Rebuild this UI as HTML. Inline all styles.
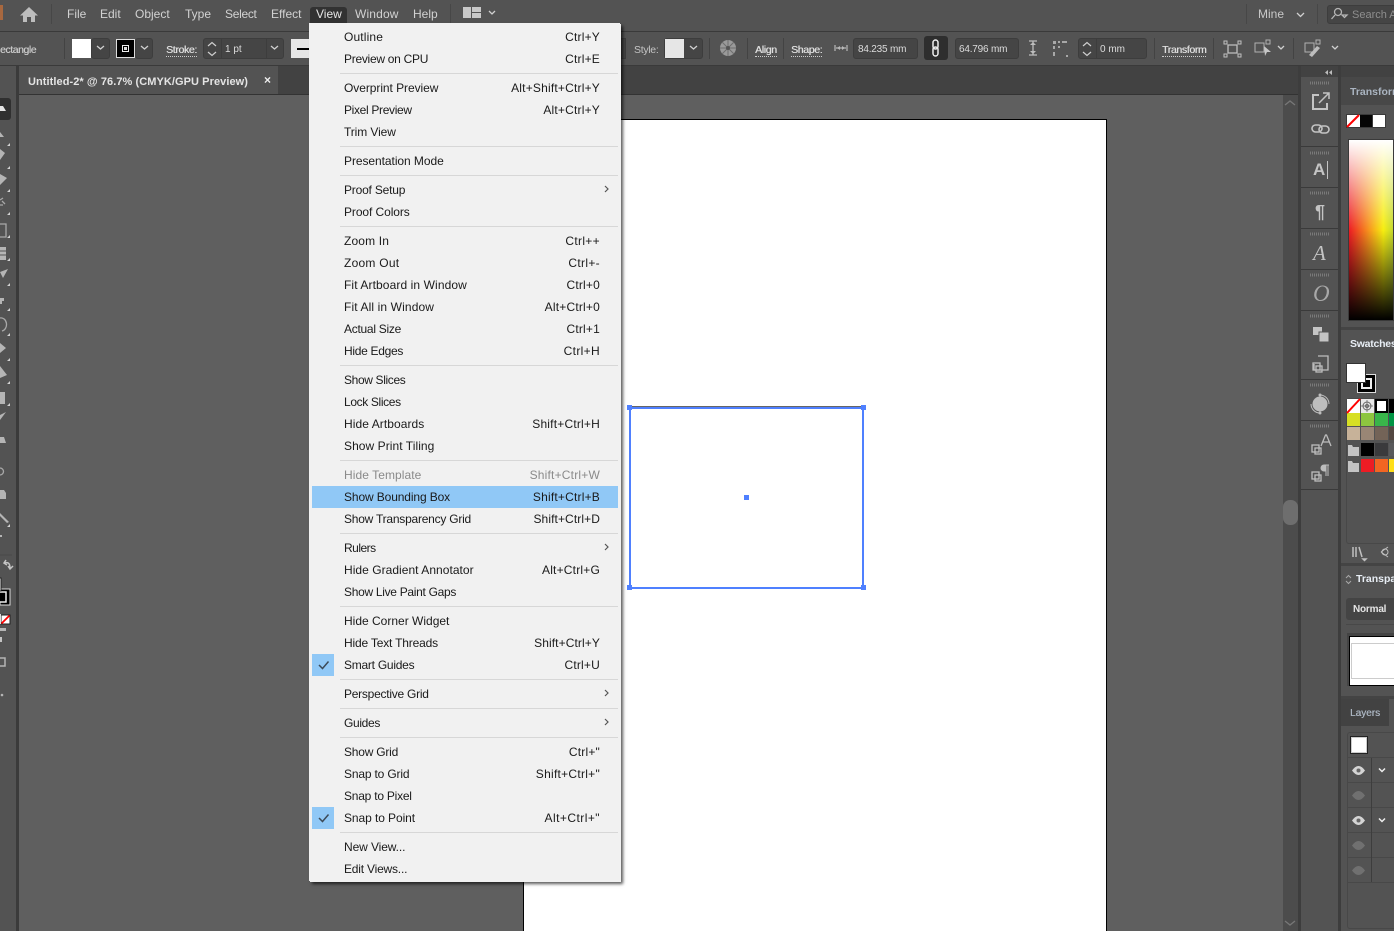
<!DOCTYPE html>
<html lang="en"><head><meta charset="utf-8"><title>Illustrator</title>
<style>
html,body{margin:0;padding:0;width:1394px;height:931px;overflow:hidden;background:#535353}
body{position:relative;font-family:"Liberation Sans",sans-serif;font-size:12px}
div,span{position:absolute;box-sizing:border-box;white-space:nowrap}
.r{background:#535353}
.m{color:#d2d2d2;top:6px;line-height:16px;font-size:12px}
.l{color:#dcdcdc;font-size:10.5px;line-height:14px;top:43px;letter-spacing:-.35px;text-shadow:.35px 0 #dcdcdc;border-bottom:1px dotted #ccc;height:14px}
.v{color:#dcdcdc;font-size:10px;line-height:14px;top:43px}
.b{background:#454545;border:1px solid #3d3d3d;border-radius:3px}
.s{width:1px;background:#434343;top:38px;height:21px}
#menu{left:310px;top:24px;width:311px;height:858px;background:#f1f1f1;box-shadow:-1px -1px 0 #f1f1f1,2px 2px 3px rgba(0,0,0,.65);border:1px solid #f1f1f1;color:#1a1a1a}
#menu i{position:absolute;left:29px;width:278px;height:1px;background:#d7d7d7;font-style:normal}
#menu b{position:absolute;font-weight:normal;left:33px;font-size:12px;line-height:22px;height:22px}
#menu u{position:absolute;text-decoration:none;right:20px;font-size:12px;line-height:22px;height:22px;letter-spacing:.2px}
#menu em{position:absolute;left:1px;width:306px;height:22px;background:#90c8f6}
.g{color:#8a8a8a!important}
</style></head><body>
<div class="r" style="left:0;top:0;width:1394px;height:32px"></div>
<div style="left:0;top:31px;width:1394px;height:1px;background:#3a3a3a"></div>
<div style="left:0;top:5px;width:3px;height:15px;background:#a8683f"></div>
<div style="left:51px;top:4px;width:1px;height:20px;background:#474747"></div>
<div style="left:310px;top:7px;width:37px;height:17px;background:#323232;border-radius:3px 3px 0 0"></div>
<span class="m" style="left:67px">File</span><span class="m" style="left:100px">Edit</span><span class="m" style="left:135px">Object</span><span class="m" style="left:185px">Type</span><span class="m" style="left:225px;letter-spacing:-.3px">Select</span><span class="m" style="left:271px">Effect</span><span class="m" style="left:316px;color:#e6e6e6">View</span><span class="m" style="left:355px;letter-spacing:.15px">Window</span><span class="m" style="left:413px">Help</span>
<div style="left:450px;top:4px;width:1px;height:20px;background:#474747"></div>
<div style="left:1246px;top:4px;width:1px;height:20px;background:#474747"></div>
<span class="m" style="left:1258px;color:#c8c8c8">Mine</span>
<div style="left:1317px;top:4px;width:1px;height:20px;background:#474747"></div>
<div style="left:1327px;top:5px;width:80px;height:19px;background:#454545;border:1px solid #3d3d3d;border-radius:3px"></div>
<span class="m" style="left:1352px;top:7px;color:#8e8e8e;font-size:11px">Search Adobe</span>

<!-- control bar -->
<div class="r" style="left:0;top:32px;width:1394px;height:33px"></div>
<div style="left:0;top:65px;width:1394px;height:1px;background:#3a3a3a"></div>
<span class="v" style="left:0;color:#c9c9c9;font-size:10.5px;letter-spacing:-.45px;text-shadow:.2px 0 #c9c9c9">ectangle</span>
<div style="left:64px;top:38px;width:1px;height:21px;background:#434343"></div>
<div class="b" style="left:91px;top:38px;width:19px;height:21px"></div>
<div style="left:72px;top:39px;width:19px;height:19px;background:#fff"></div>
<div class="b" style="left:135px;top:38px;width:18px;height:21px"></div>
<div style="left:116px;top:39px;width:19px;height:19px;background:#000;border:1px solid #ddd"></div>
<div style="left:122px;top:45px;width:7px;height:7px;border:1px solid #eee;box-shadow:inset 0 0 0 1px #000;background:#ddd"></div>
<span class="l" style="left:166px">Stroke:</span>
<div class="b" style="left:203px;top:38px;width:81px;height:21px"></div>
<div style="left:221px;top:39px;width:1px;height:19px;background:#3d3d3d"></div>
<div style="left:266px;top:39px;width:1px;height:19px;background:#3d3d3d"></div>
<span class="v" style="left:225px">1 pt</span>
<div style="left:291px;top:39px;width:19px;height:19px;background:#e6e6e6"></div>
<div style="left:297px;top:48px;width:13px;height:2px;background:#000"></div>
<div style="left:621px;top:38px;width:5px;height:21px;background:#454545;border:1px solid #3d3d3d;border-left:0"></div>
<span class="v" style="left:634px;color:#c4c4c4;font-size:10.5px;letter-spacing:-.3px">Style:</span>
<div class="b" style="left:664px;top:38px;width:39px;height:21px"></div>
<div style="left:665px;top:39px;width:19px;height:19px;background:#e6e6e6"></div>
<div class="s" style="left:709px"></div><div class="s" style="left:747px"></div><div class="s" style="left:783px"></div>
<span class="l" style="left:755px">Align</span><span class="l" style="left:791px">Shape:</span>
<div class="b" style="left:853px;top:38px;width:65px;height:21px"></div><span class="v" style="left:858px;letter-spacing:-.2px">84.235 mm</span>
<div style="left:924px;top:36px;width:24px;height:24px;background:#2e2e2e;border-radius:3px"></div>
<div class="b" style="left:955px;top:38px;width:64px;height:21px"></div><span class="v" style="left:959px;letter-spacing:-.2px">64.796 mm</span>
<div class="b" style="left:1078px;top:38px;width:69px;height:21px"></div>
<div style="left:1096px;top:39px;width:1px;height:19px;background:#3d3d3d"></div>
<span class="v" style="left:1100px">0 mm</span>
<div class="s" style="left:1154px"></div><div class="s" style="left:1213px"></div><div class="s" style="left:1293px"></div>
<span class="l" style="left:1162px">Transform</span>

<!-- tab row -->
<div style="left:0;top:66px;width:1394px;height:29px;background:#424242"></div>
<div style="left:19px;top:66px;width:259px;height:29px;background:#535353"></div>
<div style="left:0;top:94px;width:1340px;height:1px;background:#333"></div>
<span style="left:28px;top:75px;color:#e4e4e4;font-size:11px;font-weight:bold;line-height:14px;letter-spacing:.07px">Untitled-2* @ 76.7% (CMYK/GPU Preview)</span>
<span style="left:264px;top:73px;color:#eee;font-size:12px;font-weight:bold;line-height:14px">×</span>

<!-- canvas -->
<div style="left:19px;top:95px;width:1264px;height:836px;background:#5f5f5f"></div>
<div style="left:523px;top:119px;width:584px;height:812px;background:#fff;border:1px solid #000;border-bottom:0"></div>
<div style="left:629px;top:406px;width:235px;height:1px;background:#666"></div>
<div style="left:629px;top:407px;width:235px;height:182px;border:2px solid #4f80ff"></div>
<div style="left:627px;top:405px;width:5px;height:5px;background:#4f80ff"></div><div style="left:861px;top:405px;width:5px;height:5px;background:#4f80ff"></div><div style="left:627px;top:585px;width:5px;height:5px;background:#4f80ff"></div><div style="left:861px;top:585px;width:5px;height:5px;background:#4f80ff"></div><div style="left:744px;top:495px;width:5px;height:5px;background:#4f80ff"></div>

<!-- left toolbar -->
<div class="r" style="left:0;top:66px;width:16px;height:865px"></div>
<div style="left:16px;top:66px;width:3px;height:865px;background:#3b3b3b"></div>
<div style="left:0;top:98px;width:11px;height:22px;background:#303030;border-radius:0 3px 3px 0"></div>

<!-- right scrollbar + dock -->
<div style="left:1283px;top:95px;width:15px;height:836px;background:#4c4c4c"></div>
<div style="left:1283px;top:500px;width:15px;height:25px;background:#6e6e6e;border-radius:7px"></div>
<div style="left:1298px;top:66px;width:3px;height:865px;background:#3d3d3d"></div>
<div class="r" style="left:1301px;top:66px;width:37px;height:865px"></div>
<div style="left:1301px;top:66px;width:93px;height:11px;background:#424242"></div>
<div style="left:1338px;top:66px;width:3px;height:865px;background:#3d3d3d"></div>
<div style="left:1301px;top:146px;width:37px;height:1px;background:#3a3a3a"></div><div style="left:1301px;top:187px;width:37px;height:1px;background:#3a3a3a"></div><div style="left:1301px;top:228px;width:37px;height:1px;background:#3a3a3a"></div><div style="left:1301px;top:269px;width:37px;height:1px;background:#3a3a3a"></div><div style="left:1301px;top:310px;width:37px;height:1px;background:#3a3a3a"></div><div style="left:1301px;top:379px;width:37px;height:1px;background:#3a3a3a"></div><div style="left:1301px;top:420px;width:37px;height:1px;background:#3a3a3a"></div><div style="left:1301px;top:489px;width:37px;height:1px;background:#3a3a3a"></div>
<span style="left:1313px;top:156px;color:#c4c4c4;font-size:17px;font-weight:bold;line-height:28px">A</span>
<div style="left:1327px;top:161px;width:1px;height:18px;background:#c4c4c4"></div>
<span style="left:1315px;top:200px;color:#c4c4c4;font-size:18px;font-weight:bold;line-height:24px">¶</span>
<span style="left:1313px;top:241px;color:#c4c4c4;font-family:'Liberation Serif',serif;font-style:italic;font-size:21px;line-height:24px">A</span>
<span style="left:1313px;top:281px;color:#a8a8a8;font-family:'Liberation Serif',serif;font-style:italic;font-size:23px;line-height:26px">O</span>

<!-- right panels -->
<div class="r" style="left:1341px;top:77px;width:53px;height:854px"></div>
<div style="left:1341px;top:77px;width:53px;height:28px;background:#484848"></div>
<span style="left:1350px;top:85px;color:#aab4c0;font-size:10.5px;font-weight:bold;line-height:14px">Transform</span>
<div style="left:1346px;top:114px;width:40px;height:14px;background:#3a3a3a"></div>
<div style="left:1347px;top:115px;width:13px;height:12px;background:#fff"></div>
<div style="left:1360px;top:115px;width:12px;height:12px;background:#050505"></div>
<div style="left:1373px;top:115px;width:12px;height:12px;background:#fff"></div>
<div style="left:1348px;top:139px;width:46px;height:182px;background:linear-gradient(to bottom,#fff 0,rgba(255,255,255,0) 50%,rgba(0,0,0,0) 50%,#000 100%),linear-gradient(to right,#ed1c24 0,#f7941d 45%,#f7ee10 78%,#c4d82e 100%);border:1px solid #3a3a3a"></div>
<div style="left:1341px;top:327px;width:53px;height:3px;background:#444"></div>
<span style="left:1350px;top:337px;color:#e8eef5;font-size:10.5px;font-weight:bold;line-height:14px;letter-spacing:-.25px">Swatches</span>
<div style="left:1346px;top:398px;width:48px;height:146px;border:1px solid #484848;border-right:0;border-radius:3px 0 0 3px"></div>
<div style="left:1357px;top:374px;width:19px;height:19px;background:#000;border:1px solid #ddd"></div>
<div style="left:1361px;top:378px;width:11px;height:11px;border:2px solid #eee"></div>
<div style="left:1346px;top:363px;width:20px;height:20px;background:#fff;border:1px solid #333"></div>
<div style="left:1347px;top:399px;width:13px;height:14px;background:#fff"></div>
<div style="left:1361px;top:399px;width:13px;height:14px;background:#e8e8e8"></div>
<div style="left:1375px;top:399px;width:13px;height:14px;background:#fff;border:2px solid #000"></div>
<div style="left:1389px;top:399px;width:5px;height:14px;background:#000"></div>
<div style="left:1347px;top:413px;width:13px;height:13px;background:#d7df23"></div><div style="left:1361px;top:413px;width:13px;height:13px;background:#8dc63f"></div><div style="left:1375px;top:413px;width:13px;height:13px;background:#39b54a"></div><div style="left:1389px;top:413px;width:5px;height:13px;background:#009444"></div>
<div style="left:1347px;top:427px;width:13px;height:13px;background:#c7b299"></div><div style="left:1361px;top:427px;width:13px;height:13px;background:#998675"></div><div style="left:1375px;top:427px;width:13px;height:13px;background:#736357"></div><div style="left:1389px;top:427px;width:5px;height:13px;background:#534741"></div>
<div style="left:1361px;top:443px;width:13px;height:13px;background:#000"></div><div style="left:1375px;top:443px;width:13px;height:13px;background:#3a3a3c"></div><div style="left:1389px;top:443px;width:5px;height:13px;background:#58595b"></div>
<div style="left:1361px;top:459px;width:13px;height:13px;background:#ed1c24"></div><div style="left:1375px;top:459px;width:13px;height:13px;background:#f26522"></div><div style="left:1389px;top:459px;width:5px;height:13px;background:#ffde17"></div>
<div style="left:1341px;top:563px;width:53px;height:3px;background:#444"></div>
<span style="left:1356px;top:572px;color:#e8eef5;font-size:10.5px;font-weight:bold;line-height:14px">Transparency</span>
<div style="left:1346px;top:598px;width:48px;height:22px;background:#444;border-radius:3px 0 0 3px"></div>
<span style="left:1353px;top:603px;color:#e4e4e4;font-size:10px;font-weight:bold;line-height:14px;letter-spacing:-.2px">Normal</span>
<div style="left:1346px;top:624px;width:48px;height:1px;background:#484848"></div>
<div style="left:1347px;top:633px;width:47px;height:53px;background:#444"></div>
<div style="left:1349px;top:636px;width:45px;height:50px;background:#fff;border:1px solid #000;border-right:0"></div>
<div style="left:1351px;top:643px;width:43px;height:36px;border:1px solid #ccc;border-right:0"></div>
<div style="left:1341px;top:696px;width:53px;height:3px;background:#444"></div>
<div style="left:1341px;top:699px;width:48px;height:27px;background:#424242"></div>
<span style="left:1350px;top:707px;color:#aab4c0;font-size:10px;line-height:14px;text-shadow:.3px 0 #aab4c0">Layers</span>
<div style="left:1347px;top:732px;width:47px;height:197px;border:1px solid #484848;border-right:0;border-radius:3px 0 0 3px"></div>
<div style="left:1350px;top:736px;width:18px;height:18px;background:#fff;border:1px solid #222;box-shadow:inset 0 0 0 1px #ccc"></div>
<div style="left:1347px;top:757px;width:47px;height:1px;background:#484848"></div><div style="left:1347px;top:782px;width:47px;height:1px;background:#484848"></div><div style="left:1347px;top:807px;width:47px;height:1px;background:#484848"></div><div style="left:1347px;top:832px;width:47px;height:1px;background:#484848"></div><div style="left:1347px;top:857px;width:47px;height:1px;background:#484848"></div><div style="left:1347px;top:882px;width:47px;height:1px;background:#484848"></div>
<div style="left:1371px;top:758px;width:1px;height:124px;background:#3d3d3d"></div>

<!-- icons -->
<svg style="position:absolute;left:0;top:0" width="1394" height="931" viewBox="0 0 1394 931" fill="none">
<path d="M29 7 20 15.500h3V22h4v-5h4v5h4v-6.500h3z" fill="#bdbdbd"/>
<rect x="463" y="7" width="8" height="11" fill="#c8c8c8"/><rect x="472" y="7" width="9" height="5" fill="#c8c8c8"/><rect x="472" y="13" width="9" height="5" fill="#c8c8c8"/>
<g stroke="#d0d0d0" stroke-width="1.300"><path d="M489 11l3 3 3-3M1297 13l3.500 3.500 3.500-3.500M97 46l3.500 3 3.500-3M141 46l3.500 3 3.500-3M271 46l3.500 3 3.500-3M690 46l3.500 3 3.500-3M1278 46l3 3 3-3M1332 46l3 3 3-3"/></g>
<g stroke="#cfcfcf" stroke-width="1.200"><path d="M208 46l4-3.500 4 3.500M208 52l4 3.500 4-3.500M1083 46l4-3.500 4 3.500M1083 52l4 3.500 4-3.500"/></g>
<circle cx="1338" cy="12" r="3.500" stroke="#b5b5b5" stroke-width="1.300"/><path d="M1335 15l-3.500 4M1342 15h5l-2.500 2.500z" stroke="#b5b5b5" stroke-width="1.300"/>
<circle cx="728" cy="48" r="8" fill="#9a9a9a"/><path d="M728 40v16M720 48h16M722 42l12 12M734 42l-12 12" stroke="#6e6e6e"/><circle cx="728" cy="48" r="2" fill="#535353"/>
<path d="M835 45v6M847 45v6M836 48h10" stroke="#b8b8b8" stroke-width="1.200"/><path d="M837 48l3-2v4zM845 48l-3-2v4z" fill="#b8b8b8"/>
<rect x="933" y="40" width="5" height="9" rx="2.500" stroke="#eee" stroke-width="1.500"/><rect x="933" y="47" width="5" height="9" rx="2.500" stroke="#eee" stroke-width="1.500"/>
<path d="M1029 41h8M1029 55h8M1033 41v14" stroke="#bdbdbd" stroke-width="1.300"/><path d="M1030 45h6l-3-3zM1030 51h6l-3 3z" fill="#bdbdbd"/>
<path d="M1053 41h3v3h-3zM1058 41h2v2h-2zM1062 41h5v2h-5zM1053 46h2v3h-2zM1058 46h2v2h-2zM1053 52h2v4h-2zM1066 55h2v2h-2z" fill="#a8a8a8"/>
<path d="M1228 45h9v8h-9z" stroke="#c0c0c0" stroke-width="1.300"/><path d="M1224 41h3v3h-3zM1238 41h3v3h-3zM1224 54h3v3h-3zM1238 54h3v3h-3z" stroke="#c0c0c0"/>
<path d="M1255 43h9v9h-9z" stroke="#b0b0b0"/><path d="M1264 46l7 6h-4l-2 4z" fill="#c6c6c6"/><path d="M1266 40h4v4h-4z" stroke="#b0b0b0"/>
<path d="M1305 43h9v9h-9z" stroke="#b0b0b0"/><path d="M1309 55l8-9 3 2-8 9z" fill="#bdbdbd"/><path d="M1316 40h4v4h-4z" stroke="#b0b0b0"/>
<path d="M1285 105l5-4 5 4M1285 921l5 4 5-4" stroke="#777" stroke-width="1.300"/>
<path d="M1332 70l-3 2.500 3 2.500zM1328 70l-3 2.500 3 2.500z" fill="#bdbdbd"/>
<!-- dock grips -->
<path d="M1310 83h19M1310 153h19M1310 193h19M1310 234h19M1310 275h19M1310 316h19M1310 385h19M1310 426h19" stroke="#7a7a7a" stroke-width="3" stroke-dasharray="1 1"/>
<path d="M1319 95h-6v14h14v-6" stroke="#c4c4c4" stroke-width="2"/><path d="M1319 103l10-10M1323 93h6v6" stroke="#c4c4c4" stroke-width="1.500"/>
<rect x="1312" y="125" width="10" height="7" rx="3.500" stroke="#c4c4c4" stroke-width="1.600"/><rect x="1319" y="126" width="10" height="7" rx="3.500" stroke="#c4c4c4" stroke-width="1.600"/>
<rect x="1313" y="327" width="9" height="8" fill="#c4c4c4"/><rect x="1319" y="332" width="10" height="10" fill="#c4c4c4" stroke="#535353"/>
<path d="M1318 356h10v14h-14v-6" stroke="#bdbdbd" stroke-width="1.300"/><rect x="1313" y="363" width="7" height="7" stroke="#bdbdbd" stroke-width="1.300"/><rect x="1316" y="366" width="6" height="6" stroke="#bdbdbd" stroke-width="1.300"/>
<circle cx="1320" cy="404" r="7.500" fill="#bdbdbd"/><path d="M1320 395a9 9 0 0 1 9 9M1320 413a9 9 0 0 1-9-9" stroke="#bdbdbd"/><circle cx="1320" cy="395" r="1.500" fill="#bdbdbd"/><circle cx="1320" cy="413" r="1.500" fill="#bdbdbd"/>
<rect x="1312" y="445" width="7" height="7" stroke="#bdbdbd" stroke-width="1.300"/><rect x="1315" y="448" width="6" height="6" stroke="#bdbdbd" stroke-width="1.300"/><path d="M1321 446l4.500-11h1l4.500 11M1323 442h6" stroke="#bdbdbd" stroke-width="1.300"/>
<rect x="1312" y="472" width="7" height="7" stroke="#bdbdbd" stroke-width="1.300"/><rect x="1315" y="475" width="6" height="6" stroke="#bdbdbd" stroke-width="1.300"/><path d="M1326 465h-2a3 3 0 0 0 0 6h2zM1326 465v11M1328 465v11M1326 465h3" fill="#bdbdbd" stroke="#bdbdbd"/>
<!-- swatch details -->
<path d="M1347 127l12-12" stroke="#f00" stroke-width="2"/>
<path d="M1347 413l13-14" stroke="#f00" stroke-width="2"/>
<circle cx="1367" cy="406" r="4" stroke="#666"/><circle cx="1367" cy="406" r="1.500" stroke="#666"/><path d="M1361 406h12M1367 400v12" stroke="#666" stroke-width=".8"/>
<path d="M1348 445h4l1 2h6v9h-11zM1348 461h4l1 2h6v9h-11z" fill="#c4c4c4"/>
<path d="M1353 547v10M1356 547v10M1359 547l3 10M1363 559h3l-1.500 1.500z" stroke="#c0c0c0" stroke-width="1.500"/>
<circle cx="1385" cy="552" r="3" stroke="#c0c0c0"/><path d="M1381 552l7-5M1381 552l7 5" stroke="#c0c0c0"/>
<path d="M1346 578l2.500-2.500 2.500 2.500M1346 581l2.500 2.500 2.500-2.500" stroke="#a8a8a8"/>
<!-- eyes -->
<g><path d="M1352 770.500q6.500-9 13 0q-6.500 9-13 0z" fill="#d4d4d4"/><circle cx="1358.500" cy="770.500" r="2" fill="#666"/><path d="M1352 820.500q6.500-9 13 0q-6.500 9-13 0z" fill="#d4d4d4"/><circle cx="1358.500" cy="820.500" r="2" fill="#666"/></g>
<g fill="#707070"><path d="M1352 795.500q6.500-9 13 0q-6.500 9-13 0zM1352 845.500q6.500-9 13 0q-6.500 9-13 0zM1352 870.500q6.500-9 13 0q-6.500 9-13 0z"/></g>
<path d="M1379 768.500l3 3 3-3M1379 818.500l3 3 3-3" stroke="#eee" stroke-width="1.500"/>
<!-- left tools -->
<path d="M0 106h3l3 5h-6z" fill="#e4e4e4"/>
<g fill="#b5b5b5">
<path d="M0 132l4 5h-4zM0 149l5 4-5 7zM0 174l7 4-7 7zM0 247h6v13h-6zM0 272l8-3-5 9zM0 298h4v3h-2v3h-2zM0 343l6 5-6 5zM0 366l7 9-7 3zM0 392h5v12h-5zM0 415l6-3-6 8zM0 437h4l2 6h-6zM0 490h4l2 3v6h-6zM0 513l5 5 4 4-2 1-7-7zM0 535h2v2h-2zM0 628h6v3h-6z"/>
</g>
<path d="M0 224h6v13h-6" stroke="#a8a8a8" stroke-width="1.300"/>
<path d="M0 200l3-2M0 205h3M2 201l3 3M0 318a5 6 0 0 1 2 13M0 468a3.500 3.500 0 1 1 0 7" stroke="#a8a8a8" stroke-width="1.300"/>
<path d="M0 251h6M0 255h6" stroke="#535353"/>
<g fill="#d2d2d2"><path d="M10 143l-3 3h3zM10 166l-3 3h3zM10 189l-3 3h3zM10 212l-3 3h3zM10 235l-3 3h3zM10 258l-3 3h3zM10 283l-3 3h3zM10 308l-3 3h3zM10 333l-3 3h3zM10 358l-3 3h3zM10 381l-3 3h3zM10 403l-3 3h3zM10 524l-3 3h3z"/></g>
<path d="M0 555h12" stroke="#484848"/>
<path d="M4 563c4-1 6 0 6 5M7 565l-3-2 2-3M8 566l2 3 3-3" stroke="#c4c4c4" stroke-width="1.500"/>
<rect x="0" y="589" width="10" height="16" fill="#000" stroke="#ddd"/><rect x="-4" y="592" width="10" height="10" stroke="#eee" fill="#000" stroke-width="1.500"/>
<rect x="-2" y="578" width="3" height="13" fill="#fff" stroke="#222"/>
<rect x="1" y="615" width="9" height="9" fill="#fff" stroke="#222"/><path d="M1.500 623.500l8-8" stroke="#f00" stroke-width="1.800"/>
<rect x="0" y="614" width="1" height="10" fill="#ddd"/>
<rect x="0" y="637" width="2" height="5" fill="#c4c4c4"/>
<rect x="-3" y="658" width="8" height="8" stroke="#b5b5b5" stroke-width="1.500"/>
<circle cx="2" cy="695" r="1.300" fill="#b5b5b5"/>
</svg>

<!-- menu -->
<div id="menu">
<b style="top:1px;letter-spacing:.15px">Outline</b><u style="top:1px">Ctrl+Y</u>
<b style="top:23px;letter-spacing:-.28px">Preview on CPU</b><u style="top:23px">Ctrl+E</u>
<i style="top:48px"></i>
<b style="top:52px;letter-spacing:-.06px">Overprint Preview</b><u style="top:52px">Alt+Shift+Ctrl+Y</u>
<b style="top:74px;letter-spacing:-.33px">Pixel Preview</b><u style="top:74px">Alt+Ctrl+Y</u>
<b style="top:96px;letter-spacing:-.1px">Trim View</b>
<i style="top:121px"></i>
<b style="top:125px;letter-spacing:-.06px">Presentation Mode</b>
<i style="top:150px"></i>
<b style="top:154px;letter-spacing:-.2px">Proof Setup</b>
<b style="top:176px;letter-spacing:-.08px">Proof Colors</b>
<i style="top:201px"></i>
<b style="top:205px;letter-spacing:.15px">Zoom In</b><u style="top:205px;letter-spacing:.33px">Ctrl++</u>
<b style="top:227px;letter-spacing:.25px">Zoom Out</b><u style="top:227px;letter-spacing:.33px">Ctrl+-</u>
<b style="top:249px;letter-spacing:.1px">Fit Artboard in Window</b><u style="top:249px">Ctrl+0</u>
<b style="top:271px;letter-spacing:.12px">Fit All in Window</b><u style="top:271px">Alt+Ctrl+0</u>
<b style="top:293px;letter-spacing:-.27px">Actual Size</b><u style="top:293px">Ctrl+1</u>
<b style="top:315px;letter-spacing:-.3px">Hide Edges</b><u style="top:315px;letter-spacing:.33px">Ctrl+H</u>
<i style="top:340px"></i>
<b style="top:344px;letter-spacing:-.36px">Show Slices</b>
<b style="top:366px;letter-spacing:-.36px">Lock Slices</b>
<b style="top:388px;letter-spacing:.07px">Hide Artboards</b><u style="top:388px">Shift+Ctrl+H</u>
<b style="top:410px;letter-spacing:.06px">Show Print Tiling</b>
<i style="top:435px"></i>
<b class="g" style="top:439px;letter-spacing:.07px">Hide Template</b><u class="g" style="top:439px">Shift+Ctrl+W</u>
<em style="top:461px"></em>
<b style="top:461px;letter-spacing:-.12px">Show Bounding Box</b><u style="top:461px">Shift+Ctrl+B</u>
<b style="top:483px;letter-spacing:-.23px">Show Transparency Grid</b><u style="top:483px;letter-spacing:.1px">Shift+Ctrl+D</u>
<i style="top:508px"></i>
<b style="top:512px;letter-spacing:-.5px">Rulers</b>
<b style="top:534px;letter-spacing:.04px">Hide Gradient Annotator</b><u style="top:534px">Alt+Ctrl+G</u>
<b style="top:556px;letter-spacing:-.3px">Show Live Paint Gaps</b>
<i style="top:581px"></i>
<b style="top:585px">Hide Corner Widget</b>
<b style="top:607px;letter-spacing:-.18px">Hide Text Threads</b><u style="top:607px;letter-spacing:.1px">Shift+Ctrl+Y</u>
<b style="top:629px;letter-spacing:-.25px">Smart Guides</b><u style="top:629px">Ctrl+U</u>
<i style="top:654px"></i>
<b style="top:658px;letter-spacing:-.25px">Perspective Grid</b>
<i style="top:683px"></i>
<b style="top:687px;letter-spacing:-.33px">Guides</b>
<i style="top:712px"></i>
<b style="top:716px;letter-spacing:-.22px">Show Grid</b><u style="top:716px">Ctrl+"</u>
<b style="top:738px;letter-spacing:-.17px">Snap to Grid</b><u style="top:738px;letter-spacing:.27px">Shift+Ctrl+"</u>
<b style="top:760px;letter-spacing:-.23px">Snap to Pixel</b>
<b style="top:782px;letter-spacing:-.08px">Snap to Point</b><u style="top:782px;letter-spacing:.45px">Alt+Ctrl+"</u>
<i style="top:807px"></i>
<b style="top:811px;letter-spacing:-.1px">New View...</b>
<b style="top:833px;letter-spacing:-.2px">Edit Views...</b>
<em style="top:629px;width:22px"></em><em style="top:782px;width:22px"></em>
<svg style="position:absolute;left:0;top:0" width="311" height="858" fill="none">
<path d="M8 640l3.500 3.500 6-7M8 793l3.500 3.500 6-7" stroke="#3c4a58" stroke-width="1.500"/>
<path d="M294 161l3 3-3 3M294 519l3 3-3 3M294 665l3 3-3 3M294 694l3 3-3 3" stroke="#555" stroke-width="1.200"/>
</svg>
</div>
</body></html>
